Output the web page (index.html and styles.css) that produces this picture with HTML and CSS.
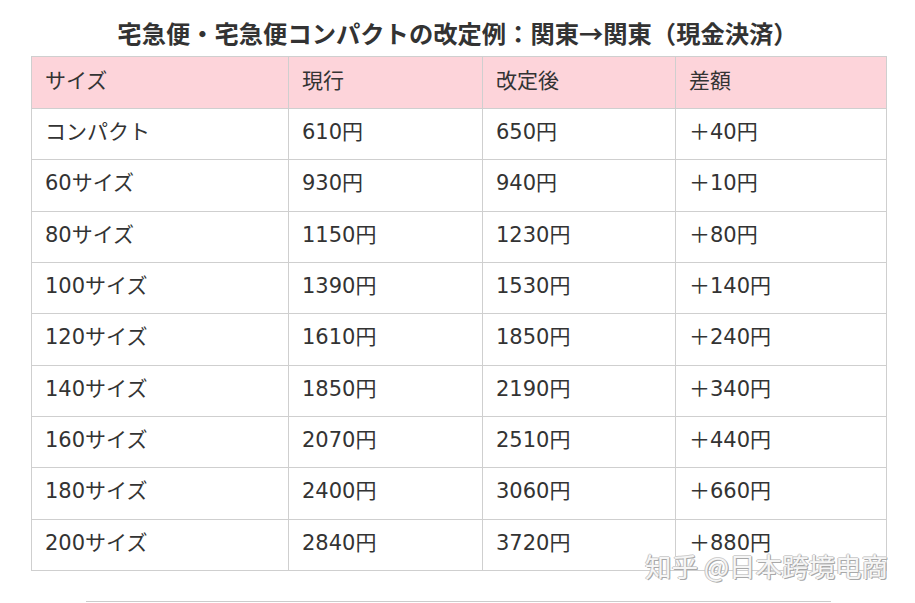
FILE: index.html
```html
<!DOCTYPE html>
<html lang="ja">
<head>
<meta charset="utf-8">
<link rel="stylesheet" href="styles.css">
</head>
<body>
<div class="page">
  <h2 class="title">宅急便・宅急便コンパクトの改定例：関東→関東（現金決済）</h2>
  <table class="rates">
    <colgroup><col class="c1"><col class="c2"><col class="c3"><col class="c4"></colgroup>
    <thead>
      <tr><th>サイズ</th><th>現行</th><th>改定後</th><th>差額</th></tr>
    </thead>
    <tbody>
      <tr><td>コンパクト</td><td>610円</td><td>650円</td><td>＋40円</td></tr>
      <tr><td>60サイズ</td><td>930円</td><td>940円</td><td>＋10円</td></tr>
      <tr><td>80サイズ</td><td>1150円</td><td>1230円</td><td>＋80円</td></tr>
      <tr><td>100サイズ</td><td>1390円</td><td>1530円</td><td>＋140円</td></tr>
      <tr><td>120サイズ</td><td>1610円</td><td>1850円</td><td>＋240円</td></tr>
      <tr><td>140サイズ</td><td>1850円</td><td>2190円</td><td>＋340円</td></tr>
      <tr><td>160サイズ</td><td>2070円</td><td>2510円</td><td>＋440円</td></tr>
      <tr><td>180サイズ</td><td>2400円</td><td>3060円</td><td>＋660円</td></tr>
      <tr><td>200サイズ</td><td>2840円</td><td>3720円</td><td>＋880円</td></tr>
    </tbody>
  </table>
  <div class="rule"></div>
  <div class="watermark">知乎 @日本跨境电商</div>
</div>
</body>
</html>
```
FILE: styles.css
```css
html, body {
  margin: 0;
  padding: 0;
  background: #fff;
}
body {
  font-family: "DejaVu Sans", "Noto Sans CJK JP", sans-serif;
  color: #333;
  overflow: hidden;
}
.page {
  position: relative;
  width: 915px;
  height: 603px;
}
.title {
  margin: 0;
  height: 56px;
  padding-top: 16px;
  box-sizing: border-box;
  text-align: center;
  font-family: "Noto Sans CJK JP", sans-serif;
  font-size: 24.3px;
  line-height: 34px;
  font-weight: bold;
  color: #333;
}
.rates {
  margin-left: 31px;
  width: 855px;
  border-collapse: collapse;
  table-layout: fixed;
  font-size: 21px;
}
.c1 { width: 257px; }
.c2 { width: 194px; }
.c3 { width: 193px; }
.c4 { width: 211px; }
.rates th,
.rates td {
  border: 1px solid #cfcfcf;
  padding: 0 13px 3px;
  text-align: left;
  font-weight: normal;
  color: #333;
  line-height: 1;
  vertical-align: middle;
}
.rates th {
  background: #fdd4da;
  height: 48px;
}
.rates td {
  height: 47.33px;
}
.rule {
  margin: 30px 0 0 86px;
  width: 745px;
  border-top: 1px solid #cccccc;
}
.watermark {
  position: absolute;
  left: 645px;
  top: 548px;
  font-family: "Noto Sans CJK SC", sans-serif;
  font-size: 26.5px;
  line-height: 36px;
  color: #f6f6f6;
  text-shadow: 1px 1px 0 #a8a8a8, -1px 0 0 #c4c4c4, 0 -1px 0 #d0d0d0, 1px 0 0 #b0b0b0;
}
```
